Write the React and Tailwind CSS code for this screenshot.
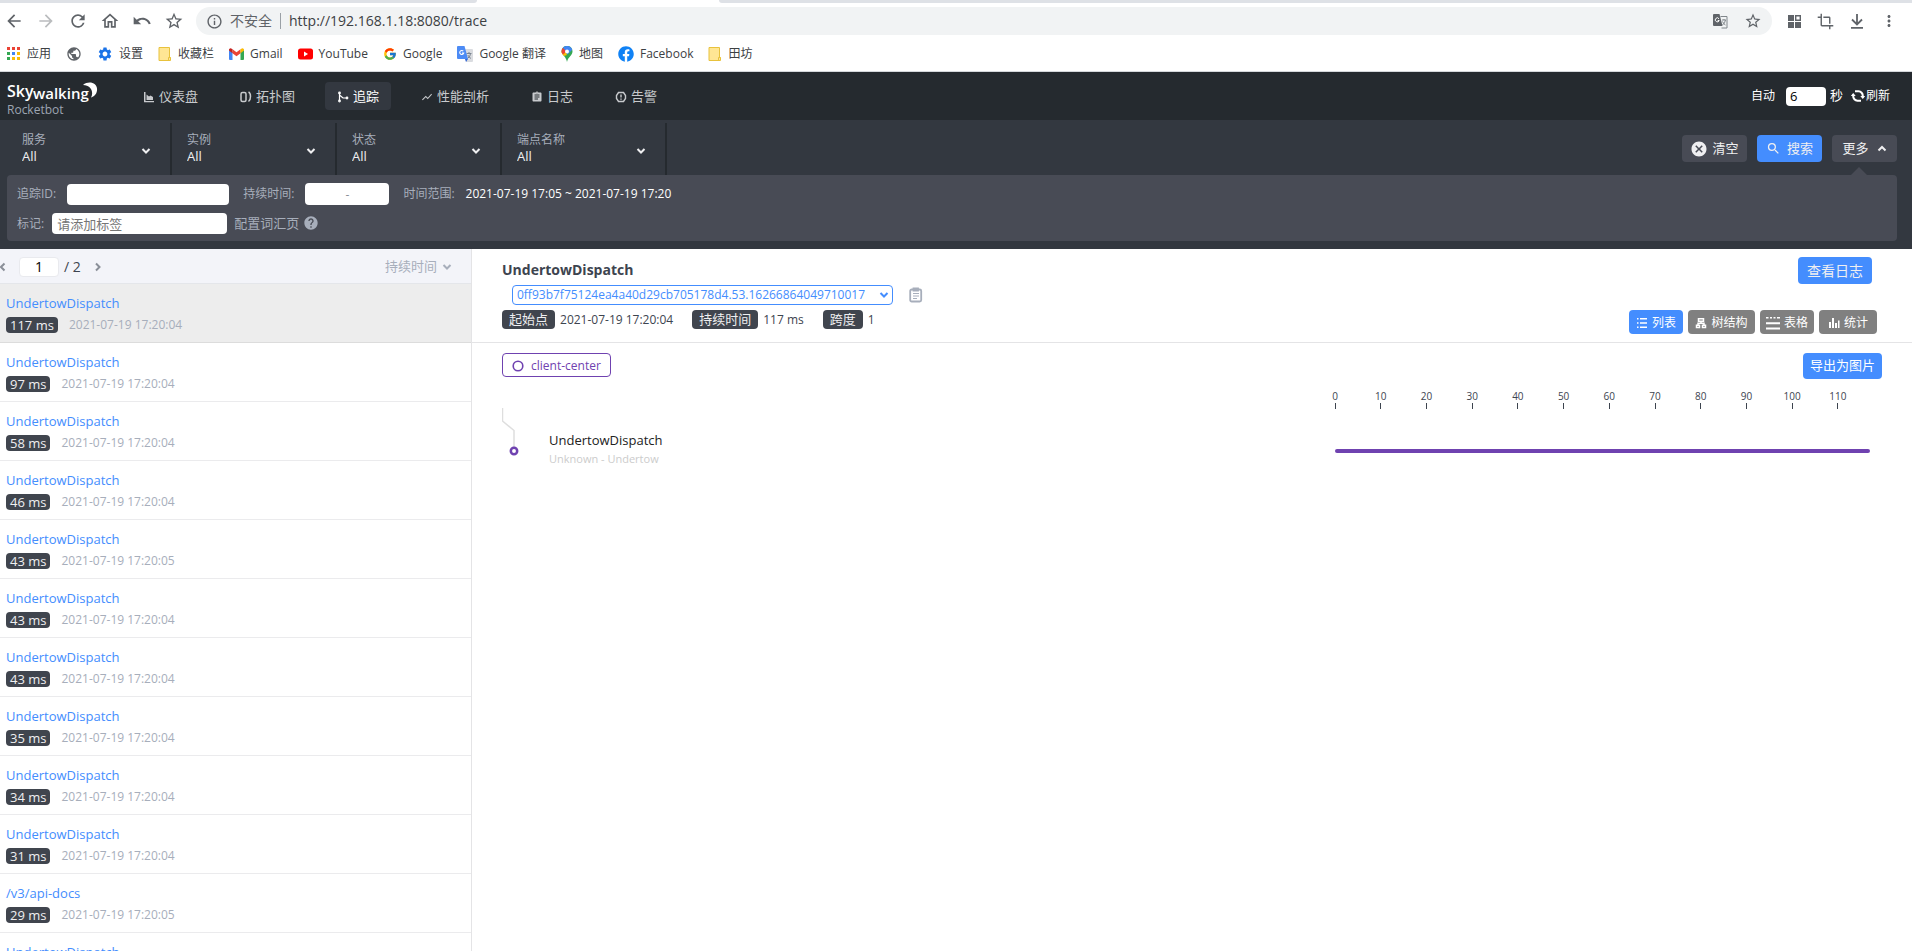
import { useState } from 'react'
import {
  MdArrowBack, MdArrowForward, MdRefresh, MdUndo, MdStarBorder, MdInfoOutline, MdPublic, MdSettings,
  MdOutlineHome, MdMoreVert, MdCrop, MdAssignment, MdSearch, MdHelp, MdCancel, MdShowChart,
} from 'react-icons/md'
import { FcGoogle } from 'react-icons/fc'
import { FaFacebook } from 'react-icons/fa'

const TRACES = [
  { name: 'UndertowDispatch', ms: 117, time: '2021-07-19 17:20:04' },
  { name: 'UndertowDispatch', ms: 97, time: '2021-07-19 17:20:04' },
  { name: 'UndertowDispatch', ms: 58, time: '2021-07-19 17:20:04' },
  { name: 'UndertowDispatch', ms: 46, time: '2021-07-19 17:20:04' },
  { name: 'UndertowDispatch', ms: 43, time: '2021-07-19 17:20:05' },
  { name: 'UndertowDispatch', ms: 43, time: '2021-07-19 17:20:04' },
  { name: 'UndertowDispatch', ms: 43, time: '2021-07-19 17:20:04' },
  { name: 'UndertowDispatch', ms: 35, time: '2021-07-19 17:20:04' },
  { name: 'UndertowDispatch', ms: 34, time: '2021-07-19 17:20:04' },
  { name: 'UndertowDispatch', ms: 31, time: '2021-07-19 17:20:04' },
  { name: '/v3/api-docs', ms: 29, time: '2021-07-19 17:20:05' },
  { name: 'UndertowDispatch', ms: 28, time: '2021-07-19 17:20:04' },
]

const TICKS = [0, 10, 20, 30, 40, 50, 60, 70, 80, 90, 100, 110]
const DURATION = 117

const Chevron = ({ className, d = 'M1.5 3 5 6.5 8.5 3' }) => (
  <svg className={className} width="10" height="10" viewBox="0 0 10 10" fill="none" stroke="currentColor" strokeWidth="2">
    <path d={d} />
  </svg>
)

/* ---------- browser icons ---------- */

const AppsIcon = () => (
  <svg width="14" height="14" viewBox="0 0 14 14">
    <path fill="#ea4335" d="M0 0h3v3H0zM5 0h3v3H5zM10 0h3v3h-3z" />
    <path fill="#34a853" d="M0 5h3v3H0zM0 10h3v3H0z" />
    <path fill="#4285f4" d="M5 5h3v3H5z" />
    <path fill="#fbbc05" d="M10 5h3v3h-3zM5 10h3v3H5zM10 10h3v3h-3z" />
  </svg>
)

const FolderIcon = () => (
  <svg width="14" height="16" viewBox="0 0 14 16">
    <path d="M1 1.5h10.5v10h1v3H1z" fill="#ffe694" stroke="#e8c23c" />
    <path d="M10.5 14.5v-3h2" fill="none" stroke="#e8c23c" />
  </svg>
)

const GmailIcon = () => (
  <svg width="15" height="12" viewBox="0 0 15 12">
    <path fill="#4285f4" d="M0 2v9a1 1 0 0 0 1 1h2.500V4z" />
    <path fill="#34a853" d="M11.500 4v8H14a1 1 0 0 0 1-1V2z" />
    <path fill="#ea4335" d="M3.500 1.200 7.500 4.300l4-3.100v4L7.500 8.300l-4-3.100z" />
    <path fill="#c5221f" d="M0 2A1.600 1.600 0 0 1 2.700.7l.8.6v3.900L0 2.600z" />
    <path fill="#fbbc04" d="M15 2A1.600 1.600 0 0 0 12.300.7l-.8.6v3.900L15 2.600z" />
  </svg>
)

const YoutubeIcon = () => (
  <svg width="15" height="12" viewBox="0 0 15 12">
    <rect width="15" height="11" y=".5" rx="2.500" fill="#f00" />
    <path d="M6 3.600v4.800L10 6z" fill="#fff" />
  </svg>
)

const TranslateIcon = () => (
  <svg width="16" height="16" viewBox="0 0 16 16">
    <path d="M7 3h8a1 1 0 0 1 1 1v11a1 1 0 0 1-1 1H9z" fill="#dadce0" />
    <path d="M9.500 7.500h5M12 6v1.500M10.500 12.500q3-2 3-5M10.800 9q.8 2 3.200 3.500" stroke="#7b8591" fill="none" />
    <path d="M1 0h6.500l3.500 13H1a1 1 0 0 1-1-1V1a1 1 0 0 1 1-1z" fill="#4c8bf5" />
    <path d="M8 13h3l-2 3z" fill="#3367d6" />
    <path d="M6.300 5.200A2 2 0 1 0 6.700 7H4.900" stroke="#fff" strokeWidth="1.100" fill="none" />
  </svg>
)

const MapsIcon = () => (
  <svg width="12" height="16" viewBox="0 0 12 16">
    <path d="M6 16c-.6-3-1.500-4-3-6C1.500 8.200.5 7 .5 5A5.500 5.500 0 0 1 11.500 5.500c0 2-1 3.200-2.500 5C7.500 12.300 6.600 13 6 16z" fill="#34a853" />
    <path d="M3 10C1.500 8.200.5 7.500.5 5.500L3 3l3 6z" fill="#fbbc04" />
    <path d="M.5 5.500a5.500 5.500 0 0 1 1.400-3.700L6 5 2 8.500C1 7.500.5 6.500.5 5.500z" fill="#ea4335" />
    <path d="M1.900 1.800A5.500 5.500 0 0 1 11.200 3.700L6.500 8.500 4 4z" fill="#4285f4" />
    <circle cx="6" cy="5.500" r="2" fill="#fff" />
  </svg>
)

const TranslateGrayIcon = () => (
  <svg width="15" height="15" viewBox="0 0 15 15">
    <path d="M7.500 2.500h6.500v11.500H8.500" fill="none" stroke="#80868b" />
    <path d="M9 6h4M11 5v1M9.500 11q2.500-2 3-5M9.500 7.500q1 2.500 3 3.500" stroke="#80868b" fill="none" />
    <path d="M0 1a1 1 0 0 1 1-1h5.500l3 12H1a1 1 0 0 1-1-1z" fill="#5f6368" />
    <path d="M6 4.800A2 2 0 1 0 6.200 6.500H4.700" stroke="#fff" fill="none" />
  </svg>
)

const QrIcon = () => (
  <svg width="13" height="13" viewBox="0 0 13 13" fill="#5f6368">
    <path d="M0 0h6v6H0zM0 7h6v6H0zM7 7h6v6H7z" />
    <path d="M7.700.7h4.600v4.600H7.700z" fill="none" stroke="#5f6368" strokeWidth="1.400" />
  </svg>
)

const DownloadIcon = () => (
  <svg width="14" height="16" viewBox="0 0 14 16" fill="none" stroke="#5f6368" strokeWidth="1.800">
    <path d="M7 1v10M2 6.500l5 5 5-5M1 14.800h12" />
  </svg>
)

/* ---------- app icons ---------- */

const DashboardIcon = () => (
  <svg width="12" height="12" viewBox="0 0 12 12" fill="currentColor">
    <path d="M1 1h1.500v9H11v1.200H1z" />
    <path d="M3.500 9V3.500L6 5.500l1.500-1L10 6v3z" />
  </svg>
)

const TopologyIcon = () => (
  <svg width="12" height="12" viewBox="0 0 12 12" fill="none" stroke="currentColor" strokeWidth="1.500">
    <rect x="1" y="1.500" width="5" height="9" rx="1.500" />
    <path d="M8.500 1q2 1 2 4.500t-2 5" />
  </svg>
)

const TraceIcon = () => (
  <svg width="12" height="12" viewBox="0 0 12 12" fill="none" stroke="currentColor" strokeWidth="1.200">
    <path d="M2.500 2v8M2.500 4l3.500 3h4" />
    <circle cx="2.500" cy="2" r=".8" />
    <circle cx="2.500" cy="10" r=".8" />
    <circle cx="10" cy="7" r=".8" />
  </svg>
)

const AlarmIcon = () => (
  <svg width="12" height="12" viewBox="0 0 12 12" fill="none" stroke="currentColor" strokeWidth="1.400">
    <path d="M3.500 1.500h5l2 3v3l-2 3h-5l-2-3v-3z" />
    <path d="M6 3.500v3M6 7.500v1.200" />
  </svg>
)

const ReloadIcon = () => (
  <svg width="14" height="14" viewBox="0 0 14 14" fill="none" stroke="currentColor" strokeWidth="2">
    <path d="M4 2.300h3.500a4.500 4.500 0 0 1 4.300 4.700v1.500M10 11.700H6.500A4.500 4.500 0 0 1 2.200 7V5.500" />
    <path d="M9.300 7h5l-2.500 3zM-.3 7h5L2.200 4z" fill="currentColor" stroke="none" />
  </svg>
)

const ListIcon = () => (
  <svg width="12" height="12" viewBox="0 0 12 12" fill="currentColor">
    <path d="M1 1h1.500v1.500H1zM4 1h7v1.500H4zM1 5.200h1.500v1.500H1zM4 5.200h7v1.500H4zM1 9.500h1.500V11H1zM4 9.500h7V11H4z" />
  </svg>
)

const TreeIcon = () => (
  <svg width="12" height="12" viewBox="0 0 12 12" fill="none" stroke="currentColor" strokeWidth="1.500">
    <path d="M3.500 1.800h5v2.500h-5zM6 4.500v1.500M3 8V6.200h6V8M1.500 8.200h3v2.300h-3zM7.500 8.200h3v2.300h-3z" />
  </svg>
)

const GridIcon = () => (
  <svg width="14" height="14" viewBox="0 0 14 14" fill="currentColor">
    <path d="M0 1h2.500v1.500H0zM4 1h2v1.500H4zM7.500 1h2v1.500h-2zM11 1h3v1.500h-3zM0 6.200h14v2H0zM0 11.500h14v2H0z" />
  </svg>
)

const StatsIcon = () => (
  <svg width="12" height="12" viewBox="0 0 12 12" fill="currentColor">
    <path d="M1 5h2v6H1zM4 1h2v10H4zM7 6h2v5H7zM10 3.500h1.500V11H10z" />
  </svg>
)

const ClipboardIcon = () => (
  <svg width="14" height="16" viewBox="0 0 14 16" fill="none" stroke="#a7aebb" strokeWidth="1.800">
    <rect x="1.200" y="2.500" width="11" height="12" rx="1.500" />
    <path d="M4.500 1.500h4.500v2H4.500z" />
    <path d="M4 6.500h6M4 9h6M4 11.500h4" strokeWidth="1.200" />
  </svg>
)

const BOOKMARKS = [
  { icon: <AppsIcon />, label: '应用' },
  { icon: <MdPublic size={16} color="#5f6368" />, label: '' },
  { icon: <MdSettings size={16} color="#1a73e8" />, label: '设置' },
  { icon: <FolderIcon />, label: '收藏栏' },
  { icon: <GmailIcon />, label: 'Gmail' },
  { icon: <YoutubeIcon />, label: 'YouTube' },
  { icon: <FcGoogle size={14} />, label: 'Google' },
  { icon: <TranslateIcon />, label: 'Google 翻译' },
  { icon: <MapsIcon />, label: '地图' },
  { icon: <FaFacebook size={16} color="#1082f5" />, label: 'Facebook' },
  { icon: <FolderIcon />, label: '田坊' },
]

const NAV = [
  { icon: <DashboardIcon />, label: '仪表盘' },
  { icon: <TopologyIcon />, label: '拓扑图' },
  { icon: <TraceIcon />, label: '追踪', active: true },
  { icon: <MdShowChart size={12} />, label: '性能剖析' },
  { icon: <MdAssignment size={12} />, label: '日志' },
  { icon: <AlarmIcon />, label: '告警' },
]

const VIEWS = [
  { icon: <ListIcon />, label: '列表', width: 'w-[54px]' },
  { icon: <TreeIcon />, label: '树结构', width: 'w-[67px]' },
  { icon: <GridIcon />, label: '表格', width: 'w-[54px]' },
  { icon: <StatsIcon />, label: '统计', width: 'w-[58px]' },
]

function Browser() {
  return (
    <div className="shrink-0 border-b border-[#d5d8dc] bg-white text-[#3c4043]">
      <div className="flex h-[3px]">
        <div className="w-[477px] rounded-br bg-[#dee1e6]" />
        <div className="w-[242px]" />
        <div className="flex-1 rounded-bl bg-[#dee1e6]" />
      </div>
      <div className="flex h-9 items-center pr-[14px] pl-1 text-[#5f6368]">
        <div className="flex gap-3">
          <button aria-label="后退" className="flex w-5 justify-center"><MdArrowBack size={20} /></button>
          <button aria-label="前进" className="flex w-5 justify-center text-[#babcbe]"><MdArrowForward size={20} /></button>
          <button aria-label="重新加载" className="flex w-5 justify-center"><MdRefresh size={20} /></button>
          <button aria-label="主页" className="flex w-5 justify-center"><MdOutlineHome size={20} /></button>
          <button aria-label="撤销" className="flex w-5 justify-center"><MdUndo size={20} /></button>
          <button aria-label="收藏" className="flex w-5 justify-center"><MdStarBorder size={20} /></button>
        </div>
        <div className="ml-3 flex h-7 flex-1 items-center rounded-full bg-[#f1f3f4] px-2.5">
          <MdInfoOutline size={17} />
          <span className="ml-[7px] text-sm">不安全</span>
          <span className="mx-2 h-4 w-px bg-[#9aa0a6]" />
          <input
            aria-label="地址"
            className="flex-1 bg-transparent text-sm text-[#3c4043] outline-none"
            defaultValue="http://192.168.1.18:8080/trace"
          />
          <TranslateGrayIcon />
          <MdStarBorder size={18} className="ml-4" />
        </div>
        <div className="ml-4 flex items-center gap-4">
          <QrIcon />
          <MdCrop size={17} />
          <DownloadIcon />
          <MdMoreVert size={18} />
        </div>
      </div>
      <div className="flex h-8 items-center gap-[15px] px-[7px] pb-0.5 text-xs">
        {BOOKMARKS.map((b, i) => (
          <a key={i} href="#" className="flex items-center gap-1.5 whitespace-nowrap">
            {b.icon}
            {b.label && <span>{b.label}</span>}
          </a>
        ))}
      </div>
    </div>
  )
}

function Logo() {
  return (
    <div className="w-[92px] pt-1.5 text-[#9da5b2]">
      <svg width="92" height="22" viewBox="0 0 92 22" fill="#fff" fontFamily="Open Sans, sans-serif" fontWeight="600">
        <text x="0" y="16" fontSize="16">Sky</text>
        <text x="26" y="18" fontSize="15">walking</text>
        <path d="M76 4C82-1 91 2 90 9.500 89.500 14 86 16 84 16.500 87 11 84 4 76 4z" />
      </svg>
      <div className="text-xs leading-[14px]">Rocketbot</div>
    </div>
  )
}

function Header() {
  return (
    <header className="flex h-12 shrink-0 items-center bg-[#252a2f] pr-[22px] pl-[7px] text-white">
      <Logo />
      <nav className="ml-8 flex gap-[18px]">
        {NAV.map(n => (
          <a key={n.label} href="#"
            className={`flex h-7 items-center gap-1 rounded px-3 pt-0.5 text-[13px] ${
              n.active ? 'bg-[#333840] text-white' : 'text-[#c8cacd]'
            }`}>
            {n.icon}
            {n.label}
          </a>
        ))}
      </nav>
      <div className="ml-auto flex items-center text-xs">
        <label htmlFor="auto">自动</label>
        <input id="auto" defaultValue="6" className="mr-1 ml-[11px] h-[19px] w-10 rounded-sm bg-white px-1 text-[13px] text-black" />
        <span className="text-[13px]">秒</span>
        <button className="ml-2 flex items-center gap-px"><ReloadIcon />刷新</button>
      </div>
    </header>
  )
}

function FilterSelect({ label }) {
  return (
    <label className="relative flex w-[165px] flex-col justify-center border-r-2 border-[#252a2f] pb-0.5 pl-[15px] first:w-[172px] first:pl-[22px]">
      <span className="text-xs leading-4 text-[#a7aebb]">{label}</span>
      <select className="w-full appearance-none bg-transparent text-[13px] leading-4 font-medium text-[#efeff1] outline-none">
        <option>All</option>
      </select>
      <Chevron className="pointer-events-none absolute right-[19px] bottom-[19px] text-[#efeff1]" />
    </label>
  )
}

function Filters() {
  const [more, setMore] = useState(true)
  return (
    <section className="shrink-0 bg-[#333840] pt-[3px] pb-2">
      <div className="flex h-[52px]">
        {['服务', '实例', '状态', '端点名称'].map(l => <FilterSelect key={l} label={l} />)}
        <div className="mr-[15px] ml-auto flex items-center gap-2.5 pb-px text-[13px] text-[#efeff1]">
          <button className="flex h-[27px] w-[65px] items-center justify-center gap-1 rounded bg-[#484b55]">
            <MdCancel size={18} />清空
          </button>
          <button className="flex h-[27px] w-[65px] items-center justify-center gap-1.5 rounded bg-[#448dfe]">
            <MdSearch size={15} />搜索
          </button>
          <button onClick={() => setMore(!more)} className="relative flex h-[27px] w-[65px] items-center justify-center gap-2 rounded bg-[#484b55]">
            更多<Chevron d="M1.500 6.500 5 3l3.500 3.500" />
            {more && <span className="absolute top-8 left-[19px] border-8 border-t-0 border-transparent border-b-[#484b55]" />}
          </button>
        </div>
      </div>
      {more && (
        <div className="mr-[15px] ml-[7px] flex flex-col gap-2 rounded bg-[#484b55] px-2.5 pt-2 pb-[7px] text-xs text-[#a7aebb]">
          <div className="flex h-[22px] items-center">
            <label htmlFor="tid">追踪ID:</label>
            <input id="tid" className="ml-[11px] h-[21px] w-[162px] rounded-sm bg-white px-1.5 text-black" />
            <label htmlFor="dur" className="ml-3.5">持续时间:</label>
            <input id="dur" placeholder="-" className="ml-[11px] h-[22px] w-[84px] rounded-sm bg-white text-center text-black placeholder:text-[#8a8f98]" />
            <span className="ml-3.5">时间范围:</span>
            <span className="ml-[11px] text-white">2021-07-19 17:05 ~ 2021-07-19 17:20</span>
          </div>
          <div className="flex h-[21px] items-center">
            <label htmlFor="tag">标记:</label>
            <input id="tag" placeholder="请添加标签" className="ml-2 h-[21px] w-[175px] rounded-sm bg-white px-[5px] text-[13px] text-black placeholder:text-[#757575]" />
            <a href="#" className="ml-[7px] flex items-center gap-1 text-[13px]">配置词汇页<MdHelp size={16} /></a>
          </div>
        </div>
      )}
    </section>
  )
}

function TraceList() {
  const [current, setCurrent] = useState(0)
  return (
    <aside className="flex w-[472px] shrink-0 flex-col overflow-hidden border-r border-[#e4e4e6]">
      <div className="flex h-[35px] shrink-0 items-center border-b border-[#e4e6ea] bg-[#f3f4f9] pt-px text-sm text-[#3d444f]">
        <button aria-label="上一页" className="w-[19px] text-[#8a8f98]"><Chevron className="-ml-0.5" d="M6.500 1.500 3 5l3.500 3.500" /></button>
        <input aria-label="页码" defaultValue="1" className="h-5 w-10 rounded-sm border border-[#e9eaee] bg-white text-center text-black" />
        <span className="ml-[5px]">/ 2</span>
        <button aria-label="下一页" className="ml-3 text-[#8a8f98]"><Chevron d="M3 1.500 6.500 5 3 8.500" /></button>
        <label className="relative mr-[19px] ml-auto flex items-center text-[#a7aebb]">
          <select aria-label="排序" className="appearance-none bg-transparent pr-[14px] text-[13px] outline-none">
            <option>持续时间</option>
          </select>
          <Chevron className="pointer-events-none absolute right-0" />
        </label>
      </div>
      <ul>
        {TRACES.map((t, i) => (
          <li key={i} onClick={() => setCurrent(i)}
            className={`flex h-[59px] flex-col gap-1 border-b px-1.5 pt-[9px] ${
              i === current ? 'border-[#dcdcdc] bg-[#ededed]' : 'border-[#ebebed]'
            }`}>
            <a href="#" className="text-[13px] leading-5 text-[#448dfe]">{t.name}</a>
            <div className="flex items-center gap-[11px] text-xs text-[#a7aebb]">
              <span className="h-4 rounded bg-[#40454e] px-1 text-[13px] leading-4 text-[#efeff1]">{t.ms} ms</span>
              <span className="leading-4">{t.time}</span>
            </div>
          </li>
        ))}
      </ul>
    </aside>
  )
}

function Field({ label, value }) {
  return (
    <div className="flex items-center gap-[5px]">
      <span className="h-[19px] rounded bg-[#40454e] px-[7px] text-[13px] leading-[19px] text-[#efeff1]">{label}</span>
      <span>{value}</span>
    </div>
  )
}

function TraceDetail() {
  const [view, setView] = useState('列表')
  return (
    <main className="flex-1 text-[#3d444f]">
      <div className="flex h-[94px] justify-between border-b border-[#e4e4e6] pt-2 pr-[35px] pb-2 pl-[30px]">
        <div>
          <h2 className="pt-px text-sm leading-6 font-bold">UndertowDispatch</h2>
          <div className="mt-[3px] ml-2.5 flex items-center gap-4">
            <div className="relative flex items-center text-[#448dfe]">
              <select aria-label="追踪ID" className="h-5 w-[381px] appearance-none rounded border border-[#448dfe] bg-white px-1 text-xs leading-4 outline-none">
                <option>0ff93b7f75124ea4a40d29cb705178d4.53.16266864049710017</option>
              </select>
              <Chevron className="pointer-events-none absolute right-1" />
            </div>
            <button aria-label="复制"><ClipboardIcon /></button>
          </div>
          <div className="mt-[5px] flex gap-[19px] text-xs">
            <Field label="起始点" value="2021-07-19 17:20:04" />
            <Field label="持续时间" value="117 ms" />
            <Field label="跨度" value="1" />
          </div>
        </div>
        <div className="flex flex-col items-end justify-between">
          <button className="mr-[5px] h-[27px] rounded bg-[#448dfe] px-[9px] text-sm text-[#efeff1]">查看日志</button>
          <div className="flex gap-[5px]">
            {VIEWS.map(v => (
              <button key={v.label} onClick={() => setView(v.label)}
                className={`flex h-6 items-center justify-center gap-1 rounded pt-px text-xs text-white ${v.width} ${
                  v.label === view ? 'bg-[#448dfe]' : 'bg-[#808080]'
                }`}>
                {v.icon}
                {v.label}
              </button>
            ))}
          </div>
        </div>
      </div>

      <div className="flex items-start justify-between pt-2.5 pr-[30px] pl-[30px]">
        <span className="flex h-6 items-center gap-[7px] rounded border border-[#6f42b0] px-[9px] pt-px text-xs text-[#6f42b0]">
          <svg width="12" height="12" viewBox="0 0 12 12"><circle cx="6" cy="6" r="4.800" fill="none" stroke="#6f42b0" strokeWidth="1.600" /></svg>
          client-center
        </span>
        <button className="h-[26px] rounded bg-[#448dfe] px-[7px] text-[13px] text-white">导出为图片</button>
      </div>

      {/* span tree and time axis */}
      <div className="flex justify-between pt-2.5 pr-[42px] pl-[30px]">
        <div className="flex gap-7 pt-[19px]">
          <svg width="19" height="48" viewBox="0 0 19 48" fill="none">
            <path d="M.5 0v13L12 22.500V40" stroke="#dedede" strokeWidth="1.500" />
            <circle cx="12" cy="43" r="3.200" fill="#fff" stroke="#6f42b0" strokeWidth="2.500" />
          </svg>
          <div className="pt-[22px]">
            <div className="text-[13px] leading-5 text-[#222]">UndertowDispatch</div>
            <div className="text-[11px] leading-[18px] text-[#ccc]">Unknown - Undertow</div>
          </div>
        </div>
        <div className="w-[535px] shrink-0">
          <div className="flex text-[10px] leading-[14px]">
            {TICKS.map(t => (
              <div key={t} style={{ flexGrow: Math.min(10, DURATION - t), flexBasis: 0 }}>
                <div className="flex w-0 flex-col items-center">
                  <span>{t}</span>
                  <span className="h-1.5 w-px bg-[#3d444f]" />
                </div>
              </div>
            ))}
          </div>
          <div className="mt-10 h-1 rounded-full bg-[#6f42b0]" />
        </div>
      </div>
    </main>
  )
}

export default function App() {
  return (
    <div className="flex h-screen flex-col overflow-hidden bg-white font-['Open_Sans','Noto_Sans_CJK_SC',sans-serif]">
      <Browser />
      <Header />
      <Filters />
      <div className="flex min-h-0 flex-1">
        <TraceList />
        <TraceDetail />
      </div>
    </div>
  )
}
